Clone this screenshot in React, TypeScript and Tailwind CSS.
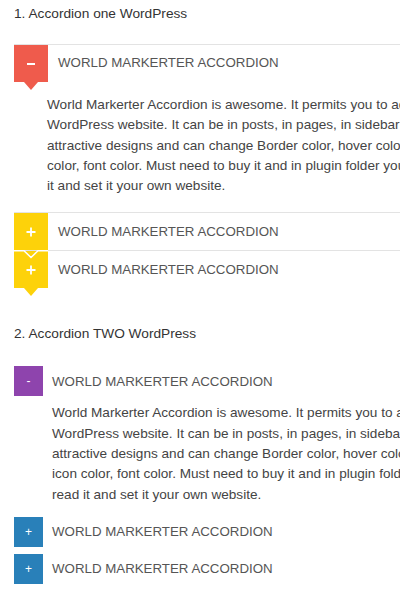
import React from "react";

const font = { fontFamily: '"Liberation Sans", Arial, sans-serif' };

function Lines({ lines }: { lines: string[] }) {
  return (
    <div className="text-[13.6px] leading-[20.3px] text-[#444] whitespace-nowrap">
      {lines.map((l, i) => (
        <div key={i}>{l}</div>
      ))}
    </div>
  );
}

function Minus() {
  return <div className="w-[8px] h-[2px] bg-white" />;
}

function Plus() {
  return (
    <svg width="10" height="10" viewBox="0 0 10 10">
      <path d="M5 0.5V9.5M0.5 5H9.5" stroke="white" strokeWidth="1.8" />
    </svg>
  );
}

function HeaderOne({
  color,
  icon,
  notch,
}: {
  color: string;
  icon: React.ReactNode;
  notch?: boolean;
}) {
  return (
    <div className="flex items-center border-t border-[#e3e3e3] relative">
      <div
        className={`relative w-[34px] h-[37px] flex items-center justify-center shrink-0 ${color}`}
      >
        {icon}
        <div
          className={`absolute top-full left-1/2 -translate-x-1/2 w-0 h-0 border-l-[7px] border-r-[7px] border-t-[8px] border-l-transparent border-r-transparent ${
            color === "bg-[#ef5b4c]" ? "border-t-[#ef5b4c]" : "border-t-[#fdd20a]"
          }`}
        />
        {notch && (
          <svg
            className="absolute left-0 top-[-1px]"
            width="34"
            height="10"
            viewBox="0 0 34 10"
          >
            <polyline
              points="0,0.75 10,0.75 17,7.5 24,0.75 34,0.75"
              fill="none"
              stroke="white"
              strokeWidth="1.5"
            />
          </svg>
        )}
      </div>
      <div className="ml-[10px] mb-[1px] text-[13.3px] text-[#555] whitespace-nowrap">
        WORLD MARKERTER ACCORDION
      </div>
    </div>
  );
}

function HeaderTwo({ color, sign }: { color: string; sign: string }) {
  return (
    <div className="flex items-center">
      <div
        className={`w-[29px] h-[30px] flex items-center justify-center shrink-0 text-white text-[12px] leading-none ${color}`}
      >
        {sign}
      </div>
      <div className="ml-[9px] text-[13.3px] text-[#555] whitespace-nowrap">
        WORLD MARKERTER ACCORDION
      </div>
    </div>
  );
}

export default function App() {
  return (
    <div
      className="w-[400px] h-[600px] overflow-hidden bg-white pl-[14px] pt-[4px]"
      style={font}
    >
      <div className="text-[13.7px] leading-[20px] text-[#333]">
        1. Accordion one WordPress
      </div>
      <div className="mt-[20px]">
        <HeaderOne color="bg-[#ef5b4c]" icon={<Minus />} />
        <div className="pl-[33px] pt-[13px] pb-[16px]">
          <Lines
            lines={[
              "World Markerter Accordion is awesome. It permits you to add accordion to your",
              "WordPress website. It can be in posts, in pages, in sidebar and widgets with",
              "attractive designs and can change Border color, hover color, icon",
              "color, font color. Must need to buy it and in plugin folder you can read",
              "it and set it your own website.",
            ]}
          />
        </div>
        <HeaderOne color="bg-[#fdd20a]" icon={<Plus />} />
        <HeaderOne color="bg-[#fdd20a]" icon={<Plus />} notch />
      </div>

      <div className="mt-[36px] text-[13.7px] leading-[20px] text-[#333]">
        2. Accordion TWO WordPress
      </div>
      <div className="mt-[22px]">
        <HeaderTwo color="bg-[#8e44ad]" sign="-" />
        <div className="pl-[38px] pt-[7px] pb-[12px]">
          <Lines
            lines={[
              "World Markerter Accordion is awesome. It permits you to add accordion to your",
              "WordPress website. It can be in posts, in pages, in sidebar and widgets with",
              "attractive designs and can change Border color, hover color,",
              "icon color, font color. Must need to buy it and in plugin folder you can",
              "read it and set it your own website.",
            ]}
          />
        </div>
        <HeaderTwo color="bg-[#2980b9]" sign="+" />
        <div className="mt-[7px]">
          <HeaderTwo color="bg-[#2980b9]" sign="+" />
        </div>
      </div>
    </div>
  );
}
